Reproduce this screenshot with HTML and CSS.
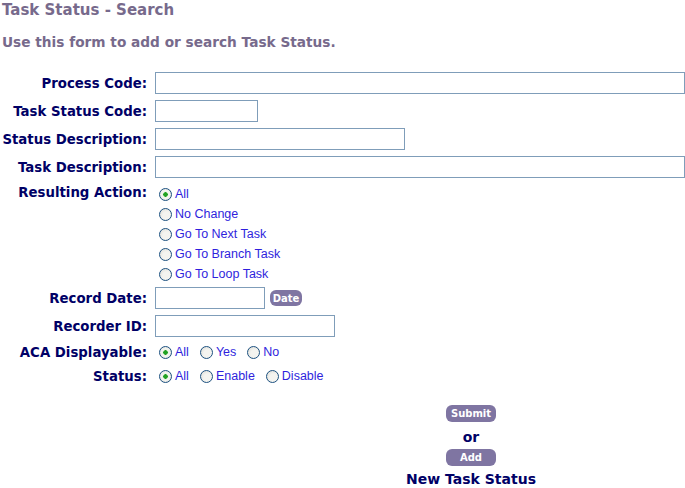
FILE: index.html
```html
<!DOCTYPE html>
<html lang="en">
<head>
    <meta charset="UTF-8">
    <title>Task Status - Search</title>
    <link rel="stylesheet" href="styles.css">
</head>
<body>

    <h1 class="page-title">Task Status - Search</h1>
    <p class="intro">Use this form to add or search Task Status.</p>

    <form class="search-form">
        <label class="field-label" for="processCode">Process Code:</label>
        <div class="field"><input type="text" id="processCode" class="txt txt-long"></div>

        <label class="field-label" for="taskStatusCode">Task Status Code:</label>
        <div class="field"><input type="text" id="taskStatusCode" class="txt txt-short"></div>

        <label class="field-label" for="statusDesc">Status Description:</label>
        <div class="field"><input type="text" id="statusDesc" class="txt txt-mid"></div>

        <label class="field-label" for="taskDesc">Task Description:</label>
        <div class="field"><input type="text" id="taskDesc" class="txt txt-long"></div>

        <span class="field-label label-top">Resulting Action:</span>
        <div class="field radio-stack">
            <label class="opt"><input type="radio" name="action" checked> All</label>
            <label class="opt"><input type="radio" name="action"> No Change</label>
            <label class="opt"><input type="radio" name="action"> Go To Next Task</label>
            <label class="opt"><input type="radio" name="action"> Go To Branch Task</label>
            <label class="opt"><input type="radio" name="action"> Go To Loop Task</label>
        </div>

        <label class="field-label" for="recordDate">Record Date:</label>
        <div class="field">
            <input type="text" id="recordDate" class="txt txt-date">
            <button type="button" class="btn btn-date">Date</button>
        </div>

        <label class="field-label" for="recorderId">Recorder ID:</label>
        <div class="field"><input type="text" id="recorderId" class="txt txt-id"></div>

        <span class="field-label">ACA Displayable:</span>
        <div class="field radio-row">
            <label class="opt"><input type="radio" name="aca" checked> All</label>
            <label class="opt"><input type="radio" name="aca"> Yes</label>
            <label class="opt"><input type="radio" name="aca"> No</label>
        </div>

        <span class="field-label">Status:</span>
        <div class="field radio-row">
            <label class="opt"><input type="radio" name="status" checked> All</label>
            <label class="opt"><input type="radio" name="status"> Enable</label>
            <label class="opt"><input type="radio" name="status"> Disable</label>
        </div>
    </form>

    <div class="actions">
        <button type="button" class="btn btn-action">Submit</button>
        <span class="or">or</span>
        <button type="button" class="btn btn-action">Add</button>
        <span class="new-label">New Task Status</span>
    </div>

</body>
</html>
```

FILE: styles.css
```css
/* Page */
body {
    margin: 0;
    padding: 0 2px;
    font-family: "DejaVu Sans", Verdana, sans-serif;
    background: #fff;
    color: #000066;
}

.page-title {
    margin: 0;
    padding-top: 1px;
    font-size: 15px;
    line-height: 18px;
    font-weight: bold;
    color: #776a8c;
}

.intro {
    margin: 15px 0 0;
    font-size: 13.7px;
    line-height: 17px;
    font-weight: bold;
    color: #776a8c;
}

/* Form grid */
.search-form {
    display: grid;
    grid-template-columns: 145px 1fr;
    column-gap: 8px;
    row-gap: 6px;
    margin-top: 21px;
}

.field-label {
    font-size: 13.3px;
    font-weight: bold;
    text-align: right;
    white-space: nowrap;
    align-self: center;
    color: #000066;
}

.label-top {
    align-self: start;
    margin-top: 1px;
}

.field {
    display: flex;
    align-items: center;
}

/* Text inputs */
.txt {
    box-sizing: border-box;
    height: 22px;
    border: 1px solid #7f9db9;
    padding: 2px 4px;
    margin: 0;
    font-size: 12px;
    background: #fff;
}

.txt-long { width: 530px; }
.txt-short { width: 103px; }
.txt-mid { width: 250px; }
.txt-date { width: 110px; }
.txt-id { width: 180px; }

/* Radios */
.radio-stack {
    flex-direction: column;
    align-items: flex-start;
    margin-bottom: -3px;
}

.radio-stack .opt {
    height: 20px;
}

.radio-row {
    gap: 7px;
    height: 18px;
}

.opt {
    display: flex;
    align-items: center;
    font-family: "Liberation Sans", Arial, sans-serif;
    font-size: 12.5px;
    color: #2f1fdd;
}

.opt input {
    appearance: none;
    -webkit-appearance: none;
    width: 13px;
    height: 13px;
    margin: 0 3px 0 4px;
    border: 1px solid #1c5180;
    border-radius: 50%;
    background: radial-gradient(circle at 60% 60%, #f4f4f0 40%, #d8d8d2 100%);
    box-sizing: border-box;
}

.opt input:checked {
    background: radial-gradient(circle, #21a121 0, #21a121 2px, #e6f4e0 2.5px, #f4f4f0 50%, #d8d8d2 100%);
}

/* Buttons */
.btn {
    border: none;
    background-color: #7f75a2;
    color: #fff;
    font-family: "DejaVu Sans", Verdana, sans-serif;
    font-weight: bold;
    font-size: 10px;
    border-radius: 6px;
    padding: 0;
    cursor: pointer;
}

.btn-date {
    margin-left: 5px;
    width: 32px;
    height: 16px;
}

.actions {
    display: flex;
    flex-direction: column;
    align-items: center;
    padding-left: 257px;
    margin-top: 20px;
}

.btn-action {
    width: 50px;
    height: 17px;
}

.or {
    font-size: 14px;
    font-weight: bold;
    line-height: 23px;
    padding-top: 4px;
}

.new-label {
    font-size: 14px;
    font-weight: bold;
    line-height: 23px;
    padding-top: 2px;
}
```
